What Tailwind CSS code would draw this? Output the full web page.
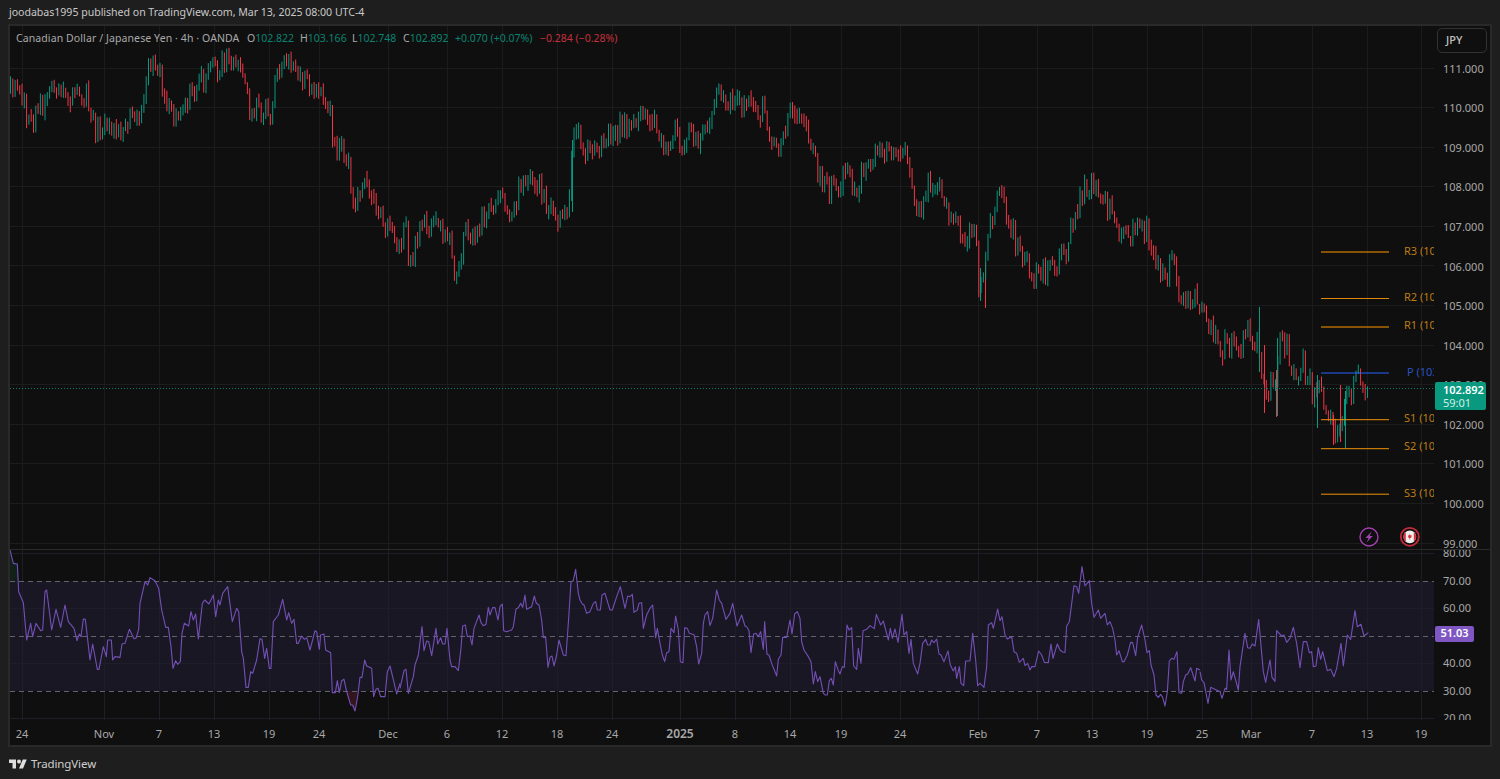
<!DOCTYPE html>
<html>
<head>
<meta charset="utf-8">
<script src="https://cdn.jsdelivr.net/npm/@tailwindcss/browser@4"></script>
</head>
<body class="m-0 bg-[#1e1e1e]">
<div class="w-[1500px] h-[779px] overflow-hidden flex flex-col bg-[#1e1e1e] font-['Noto_Sans',sans-serif] text-[11px]">
  <header class="h-[24px] shrink-0 pl-[9px] pt-[2px] flex items-center text-[#c9c9c9] text-[10.6px] tracking-[-0.03px]">joodabas1995 published on TradingView.com, Mar 13, 2025 08:00 UTC-4</header>

  <section class="ml-[8px] w-[1484px] h-[723px] shrink-0 border-2 border-[#292929] bg-[#0f0f0f] flex flex-col">
    <!-- price pane -->
    <div class="h-[523px] shrink-0 flex overflow-hidden">
      <div class="relative w-[1424px] h-full shrink-0">
        <svg class="absolute inset-0 block" width="1424" height="523" viewBox="10 26 1424 523" fill="none">
          <g stroke="#1c1c1c" stroke-width="1">
            <path d="M22.5 26V549M104.5 26V549M159.5 26V549M214.5 26V549M269.5 26V549M319.5 26V549M388.5 26V549M447.5 26V549M502.5 26V549M557.5 26V549M612.5 26V549M680.5 26V549M735.5 26V549M790.5 26V549M841.5 26V549M900.5 26V549M978.5 26V549M1037.5 26V549M1092.5 26V549M1147.5 26V549M1202.5 26V549M1251.5 26V549M1312.5 26V549M1367.5 26V549M1421.5 26V549"/>
            <path d="M10 68.5H1434M10 107.5H1434M10 147.5H1434M10 186.5H1434M10 226.5H1434M10 265.5H1434M10 305.5H1434M10 345.5H1434M10 384.5H1434M10 424.5H1434M10 463.5H1434M10 503.5H1434M10 543.5H1434"/>
          </g>
          <path id="red" stroke="#f23645" stroke-width="1"></path>
          <path id="green" stroke="#089981" stroke-width="1"></path>
          <path d="M10 388.5H1434" stroke="#0a7c6a" stroke-dasharray="1 2" stroke-width="1"/>
          <g stroke-width="1">
            <path d="M1321 252H1389" stroke="#ff9800"/>
            <path d="M1321 298.5H1389" stroke="#e08608"/>
            <path d="M1321 327H1389" stroke="#ff9800"/>
            <path d="M1321 373H1389" stroke="#2962ff"/>
            <path d="M1321 419.7H1389" stroke="#f09008"/>
            <path d="M1321 448.7H1389" stroke="#f09008"/>
            <path d="M1321 494.2H1389" stroke="#f09008"/>
          </g>
          <!-- event icons -->
          <circle cx="1369" cy="537" r="9" stroke="#a33fb0" stroke-width="1.4" fill="#0f0f0f"/>
          <path d="M1371.6 531.4L1365.4 538H1368.6L1366.6 542.6L1372.8 536H1369.6Z" fill="#a33fb0"/>
          <circle cx="1409.8" cy="536.8" r="9" stroke="#c02c3c" stroke-width="1.8" fill="#0f0f0f"/>
          <circle cx="1409.8" cy="536.8" r="6.4" fill="#efefef"/>
          <path d="M1405.8 531.8A6.4 6.4 0 0 0 1405.8 541.8ZM1413.8 531.8A6.4 6.4 0 0 1 1413.8 541.8Z" fill="#d9303e"/>
          <path d="M1409.8 534L1410.7 535.4L1411.7 535.2L1411.3 537.4L1410.1 538.2V539.4H1409.5V538.2L1408.3 537.4L1407.9 535.2L1408.9 535.4Z" fill="#d9303e"/>
        </svg>

        <div class="absolute left-[6px] top-[5px] h-[16px] flex items-center whitespace-nowrap text-[10.5px] text-[#a9a9a9]">
          <span class="w-[231px] tracking-[0.1px]">Canadian Dollar / Japanese Yen · 4h · OANDA</span>
          <span class="w-[53px]">O<span class="text-[#0b8372]">102.822</span></span>
          <span class="w-[52px]">H<span class="text-[#0b8372]">103.166</span></span>
          <span class="w-[51px]">L<span class="text-[#0b8372]">102.748</span></span>
          <span class="w-[52px]">C<span class="text-[#0b8372]">102.892</span></span>
          <span class="w-[85px] text-[#0b8372]">+0.070 (+0.07%)</span>
          <span class="text-[#c52f3d]">−0.284 (−0.28%)</span>
        </div>

        <span class="absolute left-[1394px] top-[217px] w-[30px] overflow-hidden whitespace-nowrap text-[#bd7c14]">R3 (106.367)</span>
        <span class="absolute left-[1394px] top-[263px] w-[30px] overflow-hidden whitespace-nowrap text-[#bd7c14]">R2 (105.218)</span>
        <span class="absolute left-[1394px] top-[291px] w-[30px] overflow-hidden whitespace-nowrap text-[#bd7c14]">R1 (104.497)</span>
        <span class="absolute left-[1397px] top-[338px] w-[27px] overflow-hidden whitespace-nowrap text-[#2a54c0]">P (103.348)</span>
        <span class="absolute left-[1394px] top-[384px] w-[30px] overflow-hidden whitespace-nowrap text-[#bd7c14]">S1 (102.167)</span>
        <span class="absolute left-[1394px] top-[412px] w-[30px] overflow-hidden whitespace-nowrap text-[#bd7c14]">S2 (101.418)</span>
        <span class="absolute left-[1394px] top-[459px] w-[30px] overflow-hidden whitespace-nowrap text-[#bd7c14]">S3 (100.267)</span>
      </div>

      <div class="relative flex-1 h-full text-[#a8a8a8] pt-[23px] overflow-hidden">
        <div class="h-[39.6px] flex items-center pl-[9px]">111.000</div>
        <div class="h-[39.6px] flex items-center pl-[9px]">110.000</div>
        <div class="h-[39.6px] flex items-center pl-[9px]">109.000</div>
        <div class="h-[39.6px] flex items-center pl-[9px]">108.000</div>
        <div class="h-[39.6px] flex items-center pl-[9px]">107.000</div>
        <div class="h-[39.6px] flex items-center pl-[9px]">106.000</div>
        <div class="h-[39.6px] flex items-center pl-[9px]">105.000</div>
        <div class="h-[39.6px] flex items-center pl-[9px]">104.000</div>
        <div class="h-[39.6px] flex items-center pl-[9px]">103.000</div>
        <div class="h-[39.6px] flex items-center pl-[9px]">102.000</div>
        <div class="h-[39.6px] flex items-center pl-[9px]">101.000</div>
        <div class="h-[39.6px] flex items-center pl-[9px]">100.000</div>
        <div class="h-[39.6px] flex items-center pl-[9px]">99.000</div>

        <div class="absolute left-[3px] top-[2px] w-[50px] h-[25px] rounded-[5px] border border-[#323232] bg-[#0f0f0f] flex items-center pl-[8px] text-[#c2c2c2] font-medium">JPY</div>
        <div class="absolute left-[1px] top-[356px] w-[51px] h-[28px] rounded-[2px] bg-[#08997f] pl-[8px] flex flex-col justify-center leading-[13px]">
          <span class="text-white font-semibold">102.892</span>
          <span class="text-[#d4efe9]">59:01</span>
        </div>
      </div>
    </div>

    <div class="h-px shrink-0 bg-[#2a2a2a]"></div>

    <!-- RSI pane -->
    <div class="h-[170px] shrink-0 flex overflow-hidden">
      <div class="relative w-[1424px] h-full shrink-0">
        <svg class="absolute inset-0 block" width="1424" height="170" viewBox="10 550 1424 170" fill="none">
          <rect x="10" y="581" width="1424" height="110" fill="#1a1724"/>
          <g stroke="#1f1d27" stroke-width="1">
            <path d="M22.5 550V720M104.5 550V720M159.5 550V720M214.5 550V720M269.5 550V720M319.5 550V720M388.5 550V720M447.5 550V720M502.5 550V720M557.5 550V720M612.5 550V720M680.5 550V720M735.5 550V720M790.5 550V720M841.5 550V720M900.5 550V720M978.5 550V720M1037.5 550V720M1092.5 550V720M1147.5 550V720M1202.5 550V720M1251.5 550V720M1312.5 550V720M1367.5 550V720M1421.5 550V720"/>
            <path d="M10 553.5H1434M10 608.5H1434M10 663.5H1434M10 718.5H1434"/>
          </g>
          <path d="M10 550L13 563L18 564L18.6 581H10Z" fill="#12201a"/>
          <path d="M346 691L351 705L355 711L358 691Z" fill="#33151e"/>
          <g stroke="#65626f" stroke-width="1" stroke-dasharray="5 4">
            <path d="M10 581.5H1434"/>
            <path d="M10 636.5H1434"/>
            <path d="M10 691.5H1434"/>
          </g>
          <g stroke="#7350b6" stroke-width="1.1" stroke-linejoin="round">
            <polyline vector-effect="non-scaling-stroke" transform="translate(0 540) scale(.33333)" points="30,30 40,70 52,72 56,155 70,188 80,300 92,250 98,290 108,250 122,272 128,270 135,155 140,150 155,270 168,208 182,262 195,195 205,245 222,265 231,302 238,282 243,290 250,237 256,238 270,360 278,312 292,388 297,388 310,320 319,350 323,300 334,300 338,360 345,350 360,352 366,312 375,310 388,268 402,296 408,295 416,268 420,190 435,125 443,135 450,113 465,122 476,145 485,210 497,262 505,262 513,320 519,385 527,362 533,373 541,365 546,280 553,250 566,258 573,215 580,240 587,222 595,297 607,190 614,180 627,192 640,165 647,230 655,180 660,195 668,160 683,140 697,245 710,205 716,215 725,335 730,355 738,442 745,442 752,395 758,400 770,360 780,296 786,298 794,355 800,325 808,385 813,385 820,245 835,225 848,178 860,240 866,218 875,250 882,238 890,310 895,310 905,288 913,298 920,293 930,330 945,272 950,275 958,328 962,285 972,282 977,330 992,338 997,458 1006,458 1012,422 1018,458 1025,422 1032,418 1040,455 1052,495 1058,495 1065,513 1073,470 1080,412 1086,412 1094,360 1100,378 1115,385 1121,470 1128,448 1134,445 1142,470 1155,470 1162,395 1170,378 1180,418 1190,462 1200,430"/>
            <polyline vector-effect="non-scaling-stroke" transform="translate(400 560) scale(.33333)" points="0,385 12,332 18,328 25,400 40,350 45,315 55,285 66,200 72,272 80,243 86,245 95,287 108,205 113,252 122,233 128,252 135,252 141,205 150,300 155,320 165,320 175,332 183,265 188,198 196,195 202,230 210,228 216,255 222,205 237,165 243,188 250,197 258,193 265,142 270,165 278,143 285,143 294,180 300,140 307,132 311,212 320,215 335,210 340,200 348,147 355,143 362,130 368,142 375,105 380,148 395,140 403,108 409,130 417,135 425,180 430,232 437,232 444,322 450,292 456,288 462,318 470,285 477,240 490,285 498,287 505,190 513,65 520,62 527,28 535,100 540,120 547,132 552,135 560,160 570,155 580,130 587,125 592,150 601,150 606,105 615,100 630,150 637,150 650,110 661,80 675,145 683,108 690,110 697,103 702,157 712,150 717,130 725,128 730,205 740,165 750,145 758,135 767,233 772,205 780,250 787,285 794,305 800,278 807,275 813,205 822,218 827,168 835,210 841,305 849,308 854,203 862,205 868,220 882,224 890,260 896,312 905,280 910,190 915,165 923,155 930,197 938,175 950,90 958,120 965,130 978,178 990,160 998,130 1011,198 1025,165 1035,198 1040,200 1047,212 1053,278 1061,222 1068,220 1075,230 1082,215 1090,268 1094,185 1101,283 1107,285 1115,310 1130,348 1135,298 1143,285 1148,232 1160,232 1170,180 1176,222 1184,162 1192,155 1200,175"/>
            <polyline vector-effect="non-scaling-stroke" transform="translate(800 560) scale(.33333)" points="0,175 5,245 12,270 25,290 33,305 40,372 46,335 53,365 60,350 70,400 76,405 82,405 88,362 94,355 100,375 106,305 115,332 120,342 127,320 133,322 141,195 147,210 155,203 161,318 170,328 175,265 183,310 189,212 200,208 210,197 223,206 229,163 242,195 250,183 265,240 271,205 277,235 285,207 294,247 306,163 312,225 320,215 327,280 333,238 340,310 353,342 360,310 368,250 377,238 383,255 390,255 395,240 402,248 410,237 417,282 423,285 432,305 444,273 451,315 460,333 466,320 470,355 478,320 483,370 491,377 497,303 510,303 518,220 527,300 533,377 540,370 552,382 560,320 565,195 575,188 580,205 593,147 600,182 606,170 615,225 622,237 635,230 642,275 650,280 658,307 670,295 675,317 683,310 690,330 695,320 705,320 716,273 725,285 733,307 745,308 753,252 759,295 772,252 780,270 788,276 795,277 800,198 808,185 822,77 830,80 836,100 846,20 855,78 868,62 875,130 882,172 895,150 902,175 915,160 922,195 930,185 938,205 945,240 950,285 957,272 967,305 972,305 982,285 992,247 998,248 1007,287 1013,232 1025,195 1035,240 1041,278 1048,272 1053,315 1062,345 1068,405 1075,412 1082,403 1088,412 1095,438 1102,395 1108,303 1115,295 1122,298 1131,275 1137,398 1145,400 1150,365 1157,345 1163,342 1172,323 1185,363 1190,325 1200,330"/>
            <polyline vector-effect="non-scaling-stroke" transform="translate(1200 600) scale(.33333)" points="0,215 5,240 12,248 24,310 32,262 60,275 66,295 75,265 80,268 87,150 93,240 100,215 115,270 120,200 135,100 143,143 150,145 157,132 165,138 176,58 190,215 197,247 210,180 216,232 225,244 230,92 245,108 252,105 260,127 270,115 280,82 290,130 300,203 310,125 320,125 328,158 335,155 340,200 348,198 355,143 362,178 368,155 382,212 392,208 402,230 410,205 423,130 430,198 442,105 452,118 465,32 472,80 483,73 492,108 505,98"/>
          </g>
        </svg>
      </div>
      <div class="relative flex-1 h-full text-[#a8a8a8] overflow-hidden">
        <div class="-mt-[10.4px]">
          <div class="h-[27.5px] flex items-center pl-[9px]">80.00</div>
          <div class="h-[27.5px] flex items-center pl-[9px]">70.00</div>
          <div class="h-[27.5px] flex items-center pl-[9px]">60.00</div>
          <div class="h-[27.5px] flex items-center pl-[9px]">50.00</div>
          <div class="h-[27.5px] flex items-center pl-[9px]">40.00</div>
          <div class="h-[27.5px] flex items-center pl-[9px]">30.00</div>
          <div class="h-[27.5px] flex items-center pl-[9px]">20.00</div>
        </div>
        <div class="absolute left-[1px] top-[75.5px] w-[39px] h-[16px] rounded-[2px] bg-[#7e57c2] flex items-center justify-center text-white font-semibold">51.03</div>
      </div>
    </div>

    <!-- time axis -->
    <div class="relative flex-1 text-[#a8a8a8]">
      <span class="absolute left-[12px] top-[6px] -translate-x-1/2">24</span>
      <span class="absolute left-[94px] top-[6px] -translate-x-1/2">Nov</span>
      <span class="absolute left-[149px] top-[6px] -translate-x-1/2">7</span>
      <span class="absolute left-[204px] top-[6px] -translate-x-1/2">13</span>
      <span class="absolute left-[259px] top-[6px] -translate-x-1/2">19</span>
      <span class="absolute left-[309px] top-[6px] -translate-x-1/2">24</span>
      <span class="absolute left-[378px] top-[6px] -translate-x-1/2">Dec</span>
      <span class="absolute left-[437px] top-[6px] -translate-x-1/2">6</span>
      <span class="absolute left-[492px] top-[6px] -translate-x-1/2">12</span>
      <span class="absolute left-[547px] top-[6px] -translate-x-1/2">18</span>
      <span class="absolute left-[602px] top-[6px] -translate-x-1/2">24</span>
      <span class="absolute left-[670px] top-[5px] -translate-x-1/2 font-semibold text-[12px]">2025</span>
      <span class="absolute left-[725px] top-[6px] -translate-x-1/2">8</span>
      <span class="absolute left-[780px] top-[6px] -translate-x-1/2">14</span>
      <span class="absolute left-[831px] top-[6px] -translate-x-1/2">19</span>
      <span class="absolute left-[890px] top-[6px] -translate-x-1/2">24</span>
      <span class="absolute left-[968px] top-[6px] -translate-x-1/2">Feb</span>
      <span class="absolute left-[1027px] top-[6px] -translate-x-1/2">7</span>
      <span class="absolute left-[1082px] top-[6px] -translate-x-1/2">13</span>
      <span class="absolute left-[1137px] top-[6px] -translate-x-1/2">19</span>
      <span class="absolute left-[1192px] top-[6px] -translate-x-1/2">25</span>
      <span class="absolute left-[1241px] top-[6px] -translate-x-1/2">Mar</span>
      <span class="absolute left-[1302px] top-[6px] -translate-x-1/2">7</span>
      <span class="absolute left-[1357px] top-[6px] -translate-x-1/2">13</span>
      <span class="absolute left-[1411px] top-[6px] -translate-x-1/2">19</span>
    </div>
  </section>

  <footer class="flex-1 flex items-center pl-[9px] gap-[4px] pt-[1px] text-[#cfcfcf]">
    <svg width="18" height="12" viewBox="0 3 36 20" fill="#dedede"><path d="M14 22H7V11H0V4h14v18zM28 22h-8l7.5-18h8L28 22z"/><circle cx="20" cy="8" r="4"/></svg>
    <span class="text-[11.5px] tracking-[-0.1px]">TradingView</span>
  </footer>
</div>

<script>
(function () {
  var k = "10,90 20,93 27,117 37,120 45,97 55,97 67,90 80,103 87,97 95,130 107,123 120,137 130,123 140,120 147,73 157,70 170,107 177,120 187,100 203,77 223,60 237,57 247,90 248,120 257,107 270,117 277,73 283,57 293,70 307,90 320,83 330,103 333,150 340,150 347,157 351,187 355,200 360,187 365,180 373,203 378,220 392,220 397,247 402,237 406,230 409,257 415,250 420,223 430,230 440,223 450,237 453,267 458,270 462,247 465,230 475,237 480,220 488,215 497,203 503,203 513,213 517,193 527,183 535,177 542,190 548,210 555,220 563,217 567,227 570,197 572,140 576,120 583,150 597,150 607,137 620,127 640,123 653,120 660,133 667,153 675,127 683,157 690,133 699,153 710,117 718,97 733,100 750,110 765,110 768,133 777,150 787,120 797,107 802,117 808,140 815,163 823,187 835,187 848,167 855,190 863,173 875,153 887,157 900,163 904,147 913,183 918,217 927,183 940,190 950,213 963,233 970,230 975,223 978,283 983,283 990,223 1000,197 1008,220 1015,240 1027,260 1033,273 1047,273 1057,263 1067,253 1073,223 1082,193 1090,187 1100,200 1115,213 1123,237 1137,230 1147,227 1155,260 1167,280 1173,260 1178,283 1183,303 1197,300 1207,323 1222,347 1232,343 1239,363 1245,327 1257,343 1263,373 1267,390 1277,377 1278,343 1287,347 1290,363 1298,377 1303,363 1313,397 1318,390 1328,417 1335,437 1338,427 1343,407 1347,403 1352,397 1355,370 1358,373 1363,380 1367,393 1369,387"
    .split(" ").map(function (p) { return p.split(",").map(Number); });
  var s = 20250313;
  function rnd() {
    s |= 0; s = s + 0x6D2B79F5 | 0;
    var t = Math.imul(s ^ s >>> 15, 1 | s);
    t = t + Math.imul(t ^ t >>> 7, 61 | t) ^ t;
    return ((t ^ t >>> 14) >>> 0) / 4294967296;
  }
  function at(x) {
    for (var i = 1; i < k.length; i++) {
      if (x <= k[i][0]) {
        var a = k[i - 1], b = k[i];
        return a[1] + (b[1] - a[1]) * (x - a[0]) / (b[0] - a[0]);
      }
    }
    return k[k.length - 1][1];
  }
  var red = "", green = "", prev = at(10);
  for (var x = 10.5; x <= 1369.5; x += 2.3) {
    var c = at(x) + (rnd() - 0.5) * 24;
    var top = Math.min(prev, c) - rnd() * 6;
    var bot = Math.max(prev, c) + rnd() * 6;
    if (bot - top < 9) { top -= 4; bot += 4; }
    var d = "M" + x.toFixed(1) + " " + top.toFixed(1) + "V" + bot.toFixed(1);
    if (c > prev) red += d; else green += d;
    prev = c;
  }
  green += "M572.5 140V212M1345.5 391V448M1277.5 338V416M980.5 268V301M1259.5 307V372M1317.5 375V428";
  red += "M1333.5 415V445M1340.5 385V442M985.5 262V308M1264.5 345V413M1276.5 370V417";
  document.getElementById("red").setAttribute("d", red);
  document.getElementById("green").setAttribute("d", green);
})();
</script>
</body>
</html>
